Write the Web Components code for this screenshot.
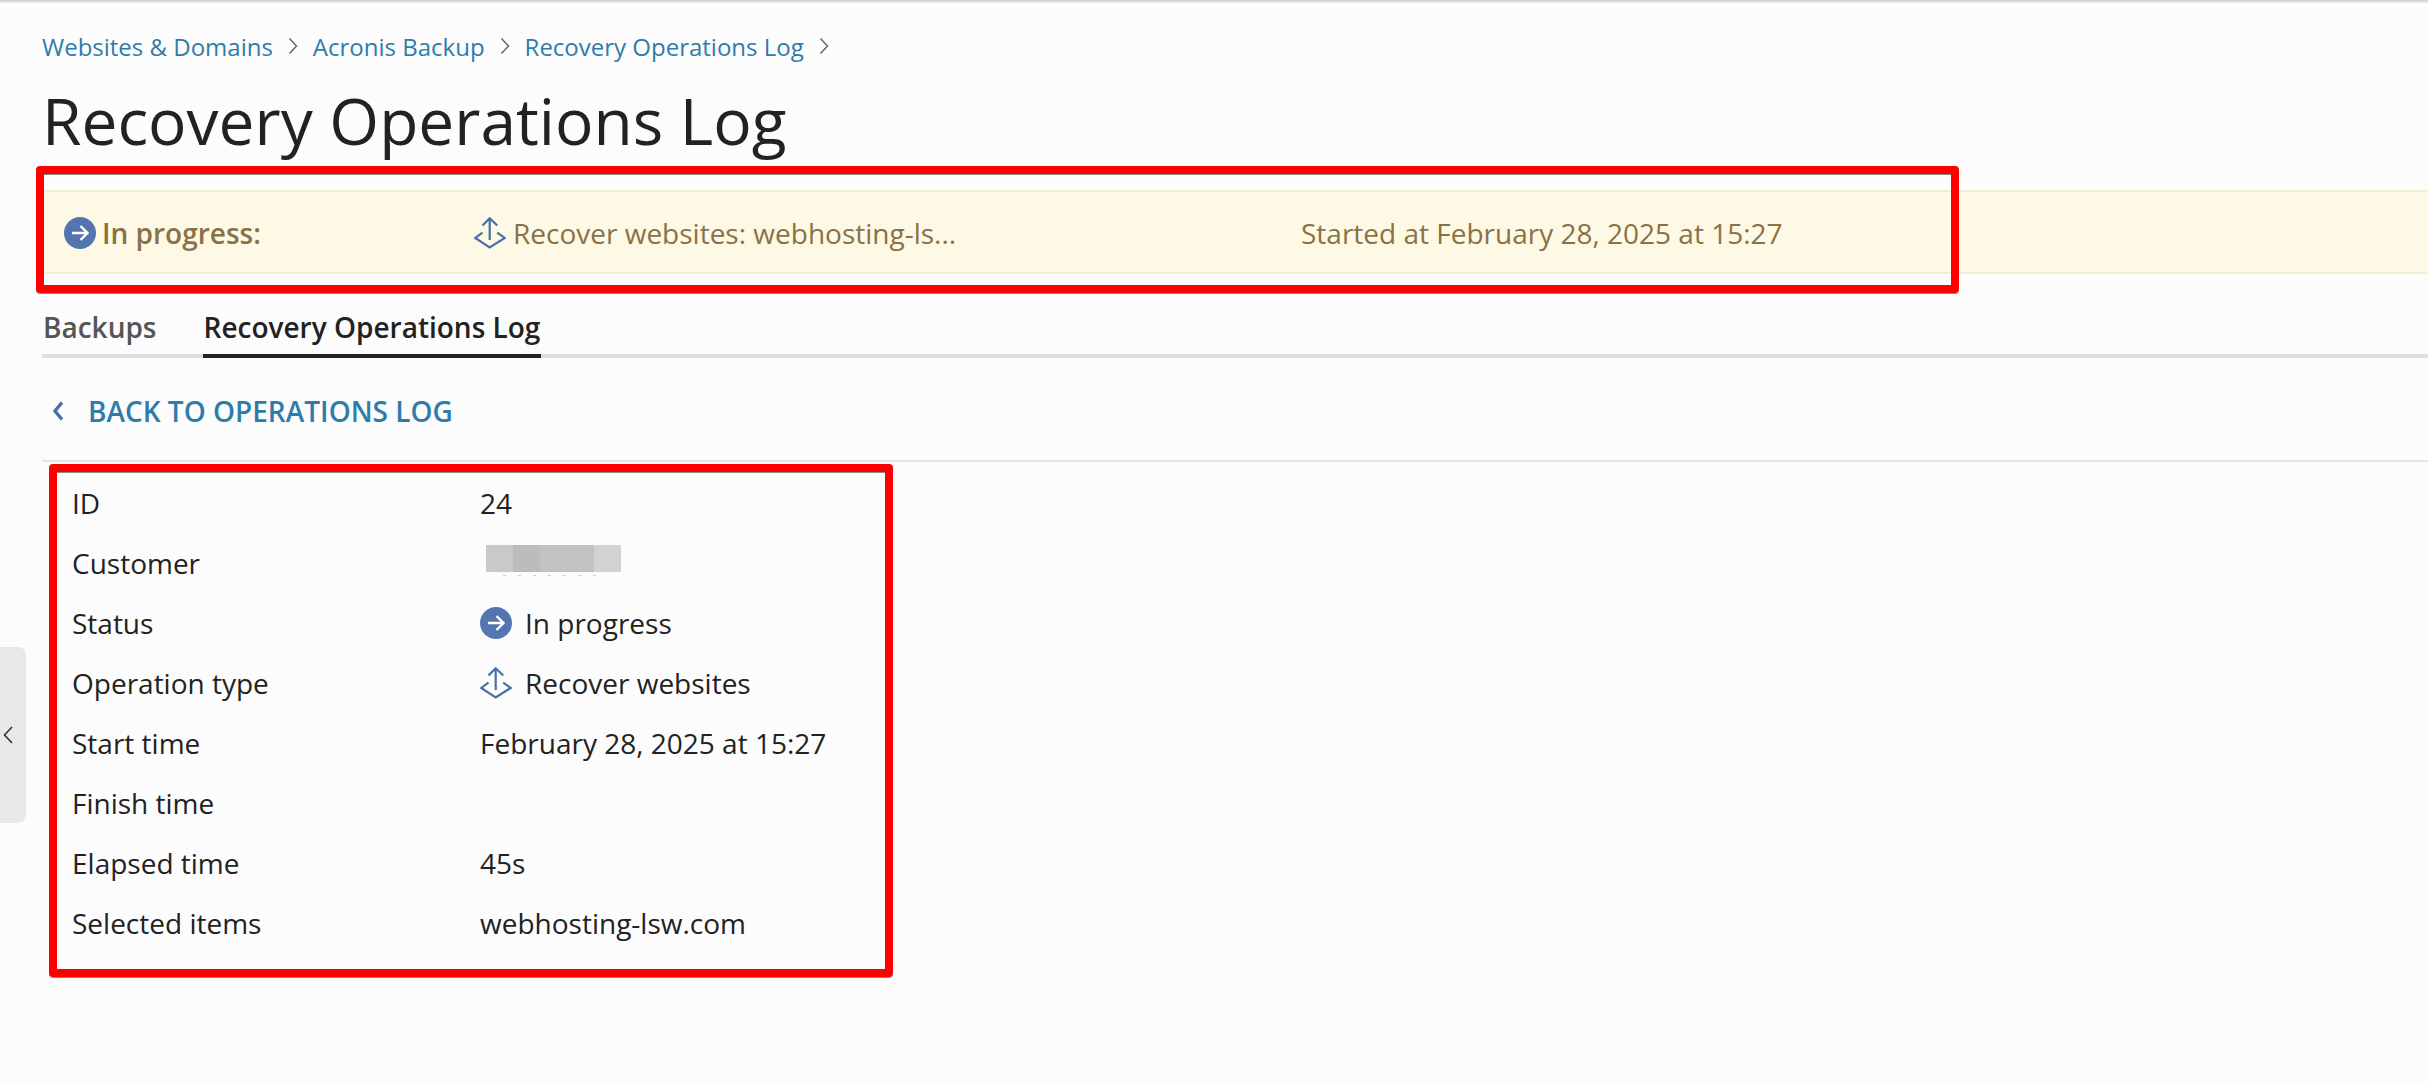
<!DOCTYPE html>
<html lang="en">
<head>
<meta charset="utf-8">
<title>Recovery Operations Log</title>
<style>
    html, body { margin: 0; height: 100%; }
    body {
        background: #fcfcfc;
        color: #222;
        font-family: "Open Sans", "Noto Sans", sans-serif;
        font-size: 28px;
        overflow: hidden;
        position: relative;
    }
</style>
</head>
<body>
<top-shadow></top-shadow>
<log-page>
    <log-breadcrumb>
        <a>Websites &amp; Domains</a>
        <a>Acronis Backup</a>
        <a>Recovery Operations Log</a>
    </log-breadcrumb>
    <log-title>Recovery Operations Log</log-title>
    <log-banner>
        <span slot="status"><status-icon></status-icon>In progress:</span>
        <span slot="operation"><recover-icon></recover-icon>Recover websites: webhosting-ls...</span>
        <span slot="started">Started at February 28, 2025 at 15:27</span>
    </log-banner>
    <log-tabs></log-tabs>
    <back-link>BACK TO OPERATIONS LOG</back-link>
    <log-details>
        <detail-row label="ID">24</detail-row>
        <detail-row label="Customer"><blur-block></blur-block></detail-row>
        <detail-row label="Status" icon><status-icon></status-icon>In progress</detail-row>
        <detail-row label="Operation type" icon><recover-icon></recover-icon>Recover websites</detail-row>
        <detail-row label="Start time">February 28, 2025 at 15:27</detail-row>
        <detail-row label="Finish time"></detail-row>
        <detail-row label="Elapsed time">45s</detail-row>
        <detail-row label="Selected items">webhosting-lsw.com</detail-row>
    </log-details>
</log-page>
<side-handle></side-handle>
<red-frame style="left:36px;top:166px;width:1923px;height:127px"></red-frame>
<red-frame style="left:49px;top:464px;width:844px;height:513px"></red-frame>

<script>
function define(name, css, html, setup) {
    customElements.define(name, class extends HTMLElement {
        constructor() {
            super();
            this.attachShadow({ mode: 'open' });
            this.shadowRoot.innerHTML = `<style>${css}</style>${html}`;
            if (setup) setup(this);
        }
    });
}

define('top-shadow', `
    :host { display: block; height: 3px; background: linear-gradient(#cfcfcf, #eeeeee); }
`, '');

define('log-page', `
    :host { display: block; padding-left: 42px; }
`, '<slot></slot>');

define('log-breadcrumb', `
    :host {
        display: flex;
        align-items: center;
        height: 34px;
        margin-top: 26px;
        font-size: 24px;
        color: #2f7cab;
    }
    .sep { width: 40px; display: flex; justify-content: center; }
    svg { display: block; }
`, '<div id="row" style="display:contents"></div>', el => {
    const chev = '<span class="sep"><svg width="10" height="18" viewBox="0 0 10 18"><path d="M1.5 1.5 8.5 9l-7 7.5" fill="none" stroke="#666" stroke-width="1.5"/></svg></span>';
    const row = el.shadowRoot.getElementById('row');
    [...el.children].forEach(a => {
        row.insertAdjacentHTML('beforeend', `<span>${a.innerHTML}</span>${chev}`);
    });
});

define('log-title', `
    :host {
        display: block;
        margin: 13px 0 25px;
        height: 89px;
        line-height: 89px;
        font-size: 64px;
        color: #222;
        white-space: nowrap;
    }
`, '<slot></slot>');

define('log-banner', `
    :host {
        display: grid;
        grid-template-columns: 410px 827px 1fr;
        align-items: center;
        box-sizing: border-box;
        height: 84px;
        padding: 2px 0 0 22px;
        background: #fdf9e5;
        border-top: 2px solid #f6ecd4;
        border-bottom: 2px solid #f6ecd4;
        color: #8a7146;
        font-size: 28px;
        white-space: nowrap;
    }
    ::slotted(span) { display: flex; align-items: center; }
    ::slotted([slot=status]) { font-weight: 600; gap: 6px; }
    ::slotted([slot=operation]) { gap: 7px; }
`, '<slot name="status"></slot><slot name="operation"></slot><slot name="started"></slot>');

define('log-tabs', `
    :host {
        display: flex;
        gap: 45px;
        height: 82px;
        margin-top: 2px;
        box-sizing: border-box;
        border-bottom: 4px solid #dedede;
        font-size: 28px;
        font-weight: 600;
        color: #555;
        white-space: nowrap;
    }
    span { box-sizing: border-box; height: 82px; padding: 20px 1px 0; line-height: 62px; }
    .on { color: #222; border-bottom: 4px solid #222; }
`, '<span>Backups</span><span class="on">Recovery Operations Log</span>');

define('back-link', `
    :host {
        display: flex;
        align-items: center;
        height: 104px;
        box-sizing: border-box;
        border-bottom: 2px solid #e2e5f0;
        padding: 4px 0 0 10px;
        font-size: 28px;
        font-weight: 600;
        color: #2f7cab;
    }
    svg { display: block; margin-right: 24px; }
`, '<svg width="12" height="20" viewBox="0 0 12 20"><path d="M10 1.5 3 10l7 8.5" fill="none" stroke="#4a6fa8" stroke-width="3.4"/></svg><slot></slot>');

define('log-details', `
    :host { display: block; padding: 11px 0 0 30px; }
`, '<slot></slot>');

define('detail-row', `
    :host {
        display: grid;
        grid-template-columns: 408px 1fr;
        align-items: center;
        height: 60px;
        color: #222;
        white-space: nowrap;
    }
    .v { display: flex; align-items: center; gap: 13px; }
`, '<span id="l"></span><span class="v"><slot></slot></span>', el => {
    el.shadowRoot.getElementById('l').textContent = el.getAttribute('label');
});

define('status-icon', `
    :host { display: inline-flex; flex: none; width: 32px; height: 32px; }
    svg { display: block; }
`, '<svg width="32" height="32" viewBox="0 0 32 32"><circle cx="16" cy="16" r="16" fill="#5375b0"/><path d="M8 16h15.5M16.5 9l7 7-7 7" fill="none" stroke="#fff" stroke-width="2.4"/></svg>');

define('recover-icon', `
    :host { display: inline-flex; flex: none; width: 32px; height: 32px; }
    svg { display: block; }
`, '<svg width="32" height="32" viewBox="0 0 32 32"><path d="M15.7 1v22M8.5 8.5 15.7 1.3l7.6 7.2M8.5 15.7 1.2 20.9l14.5 9.6L30.8 20.9l-7.6-5.2" fill="none" stroke="#4a6fa8" stroke-width="2.2"/></svg>');

define('blur-block', `
    :host { display: block; position: relative; width: 135px; height: 27px; margin: -9px 0 0 6px; background: linear-gradient(90deg, #c9c9c9 0 27px, #bcbcbc 27px 54px, #c2c2c2 54px 108px, #d2d2d2 108px); }
    :host::after {
        content: '';
        position: absolute;
        left: 17px;
        right: 17px;
        top: 30px;
        height: 1px;
        background: repeating-linear-gradient(90deg, #cfcfcf 0 3px, transparent 3px 15px);
    }
`, '');

define('side-handle', `
    :host {
        position: absolute;
        left: 0;
        top: 647px;
        width: 26px;
        height: 176px;
        display: flex;
        align-items: center;
        padding-left: 3px;
        box-sizing: border-box;
        background: #e8e8e8;
        border-radius: 0 8px 8px 0;
    }
    svg { display: block; }
`, '<svg width="10" height="18" viewBox="0 0 10 18"><path d="M9 1 1.5 9 9 17" fill="none" stroke="#333" stroke-width="1.6"/></svg>');

define('red-frame', `
    :host {
        position: absolute;
        box-sizing: border-box;
        border: 8px solid #ff0000;
        border-radius: 4px;
        box-shadow: 0 1px 0 #8a8a8a, inset 0 1px 0 #8a8a8a;
        pointer-events: none;
    }
`, '');
</script>
</body>
</html>
